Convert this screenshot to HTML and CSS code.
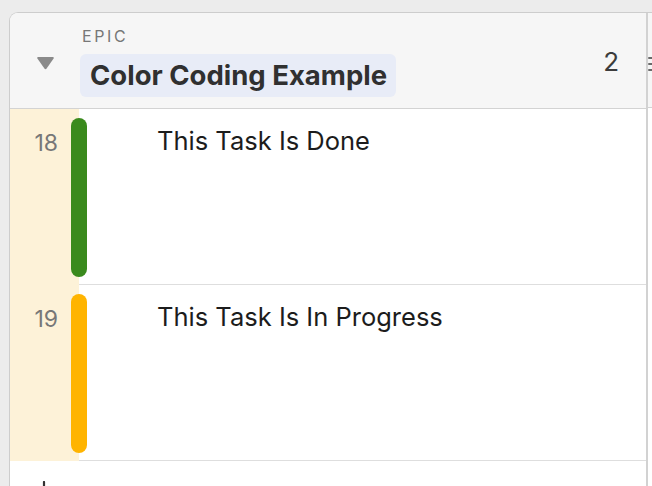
FILE: index.html
```html
<!DOCTYPE html>
<html>
<head>
<meta charset="utf-8">
<link rel="stylesheet" href="styles.css">
</head>
<body>
<div class="board">
  <div class="group">
    <div class="header">
      <div class="toggle">
        <svg width="19" height="14" viewBox="0 0 19 14"><path d="M2.2 1 H16.8 Q18.6 1 17.6 2.6 L10.6 12.6 Q9.5 14 8.4 12.6 L1.4 2.6 Q0.4 1 2.2 1 Z" fill="#8a8a8a"/></svg>
      </div>
      <div class="title-block">
        <div class="kind">EPIC</div>
        <div class="pill">Color Coding Example</div>
      </div>
      <div class="count">2</div>
    </div>
    <div class="row">
      <div class="gutter"><span class="num">18</span></div>
      <div class="cell"><span class="task">This Task Is Done</span></div>
      <div class="bar bar-done"></div>
    </div>
    <div class="row">
      <div class="gutter"><span class="num">19</span></div>
      <div class="cell"><span class="task">This Task Is In Progress</span></div>
      <div class="bar bar-progress"></div>
    </div>
    <div class="add-row">
      <svg class="add" width="14" height="14" viewBox="0 0 14 14"><path d="M7 1 V13 M1 7 H13" stroke="#333333" stroke-width="2.2" stroke-linecap="round"/></svg>
    </div>
  </div>
  <div class="next-col">
    <div class="next-head">
      <svg class="handle" width="10" height="18" viewBox="0 0 10 18"><path d="M1 3 H9 M1 9 H9 M1 15 H9" stroke="#6a6a6a" stroke-width="2" stroke-linecap="round"/></svg>
    </div>
  </div>
</div>
</body>
</html>
```

FILE: styles.css
```css
html, body {
  margin: 0;
  padding: 0;
  background: #ececec;
  overflow: hidden;
  height: 486px;
}
body {
  font-family: Inter, "Liberation Sans", sans-serif;
}
.board {
  display: flex;
  margin: 12px 0 0 9px;
  border-top: 1px solid #cdcdcd;
  border-left: 1px solid #cdcdcd;
  border-top-left-radius: 9px;
  background: #ffffff;
  height: 480px;
  overflow: hidden;
}
.group {
  width: 636px;
  flex: none;
  border-right: 2px solid #d2d2d2;
  display: flex;
  flex-direction: column;
}
.group > * {
  flex: none;
}
.header {
  display: flex;
  height: 95px;
  background: #f6f6f6;
  border-bottom: 1px solid #d3d3d3;
}
.toggle {
  width: 70px;
  flex: none;
  display: flex;
  justify-content: center;
  padding-top: 43px;
  box-sizing: border-box;
}
.title-block {
  flex: 1;
  padding-top: 14px;
}
.kind {
  font-size: 16px;
  line-height: 18px;
  letter-spacing: 2.6px;
  color: #777777;
  padding-left: 2px;
  margin-bottom: 9px;
}
.pill {
  display: inline-block;
  background: #e8ecf7;
  border-radius: 6px;
  padding: 0 9px 0 10px;
  height: 43px;
  line-height: 43px;
  font-size: 27.5px;
  font-weight: 700;
  color: #303030;
}
.count {
  padding-top: 34px;
  padding-right: 27px;
  font-size: 26px;
  line-height: 30px;
  color: #3c3c3c;
}
.row {
  display: grid;
  grid-template-columns: 61px 8px 8px 1fr;
  height: 176px;
}
.gutter {
  grid-column: 1 / 3;
  grid-row: 1;
  background: #fdf2d8;
  display: flex;
  justify-content: flex-end;
  padding: 20px 21px 0 0;
}
.num {
  font-size: 23px;
  line-height: 28px;
  color: #777777;
}
.cell {
  grid-column: 3 / 5;
  grid-row: 1;
  border-bottom: 1px solid #dedede;
  padding: 17px 0 0 78px;
}
.task {
  font-size: 25.5px;
  line-height: 30px;
  color: #1c1c1c;
}
.bar {
  grid-column: 2 / 4;
  grid-row: 1;
  margin: 9px 0 8px 0;
  border-radius: 8px;
}
.bar-done {
  background: #3a8a1d;
}
.bar-progress {
  background: #ffb400;
}
.add-row {
  padding: 20px 0 0 27px;
}
.add {
  display: block;
}
.next-col {
  flex: 1;
}
.next-head {
  height: 95px;
  background: #f6f6f6;
  border-bottom: 1px solid #d3d3d3;
  padding-top: 42px;
  box-sizing: border-box;
}
.handle {
  display: block;
  margin-left: 0;
}
```
